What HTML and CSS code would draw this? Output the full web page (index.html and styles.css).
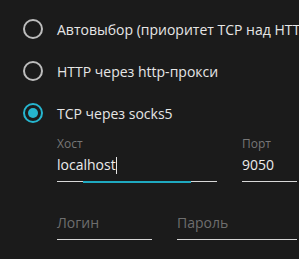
FILE: index.html
```html
<!DOCTYPE html>
<html lang="ru">
<head>
    <meta charset="UTF-8">
    <title>Прокси</title>
    <link rel="stylesheet" href="styles.css">
</head>
<body>

<div class="proxy-panel">
    <div class="radio-list">
        <label class="radio-row">
            <span class="radio"></span>
            <span class="radio-text">Автовыбор (приоритет TCP над HTTP)</span>
        </label>
        <label class="radio-row">
            <span class="radio"></span>
            <span class="radio-text">HTTP через http-прокси</span>
        </label>
        <label class="radio-row">
            <span class="radio checked"></span>
            <span class="radio-text">TCP через socks5</span>
        </label>
    </div>

    <div class="field-row">
        <div class="field host">
            <div class="field-label">Хост</div>
            <div class="field-value">localhost<span class="caret"></span></div>
            <div class="field-line"><div class="field-focus"></div></div>
        </div>
        <div class="field port">
            <div class="field-label">Порт</div>
            <div class="field-value">9050</div>
            <div class="field-line"></div>
        </div>
    </div>

    <div class="field-row empty">
        <div class="field login">
            <div class="field-value placeholder">Логин</div>
            <div class="field-line"></div>
        </div>
        <div class="field password">
            <div class="field-value placeholder">Пароль</div>
            <div class="field-line"></div>
        </div>
    </div>
</div>

</body>
</html>
```

FILE: styles.css
```css
body {
    margin: 0;
    background-color: #1b1b1b;
    font-family: 'Open Sans', sans-serif;
    color: #e6e6e6;
    overflow: hidden;
}
.proxy-panel {
    padding: 8px 0 0 23px;
    height: 251px;
    overflow: hidden;
}
.radio-row {
    display: flex;
    align-items: center;
    height: 42px;
    white-space: nowrap;
}
.radio {
    width: 20px;
    height: 20px;
    box-sizing: border-box;
    border: 2px solid #bdbdbd;
    border-radius: 50%;
    margin-right: 14px;
    display: flex;
    align-items: center;
    justify-content: center;
    flex-shrink: 0;
}
.radio.checked {
    border-color: #26b6cf;
}
.radio.checked::after {
    content: '';
    width: 10px;
    height: 10px;
    border-radius: 50%;
    background-color: #26b6cf;
}
.radio-text {
    font-size: 14px;
}
.field-row {
    display: flex;
    gap: 25px;
    padding-left: 34px;
    margin-top: 2px;
}
.field-row.empty {
    margin-top: 28px;
}
.field-label {
    font-size: 12px;
    color: #777;
    line-height: 16px;
}
.field-value {
    font-size: 14px;
    line-height: 20px;
    margin-top: 3px;
    padding-bottom: 6px;
    color: #ececec;
}
.field-value.placeholder {
    color: #6e6e6e;
}
.caret {
    display: inline-block;
    width: 1px;
    height: 17px;
    background-color: #e6e6e6;
    vertical-align: -4px;
}
.field-line {
    height: 1px;
    background-color: #d8d8d8;
    display: flex;
    justify-content: center;
}
.field-focus {
    width: 108px;
    height: 2px;
    background-color: #1fa9c0;
}
.host { width: 160px; }
.port { width: 55px; }
.login { width: 95px; }
.password { width: 120px; }
```
